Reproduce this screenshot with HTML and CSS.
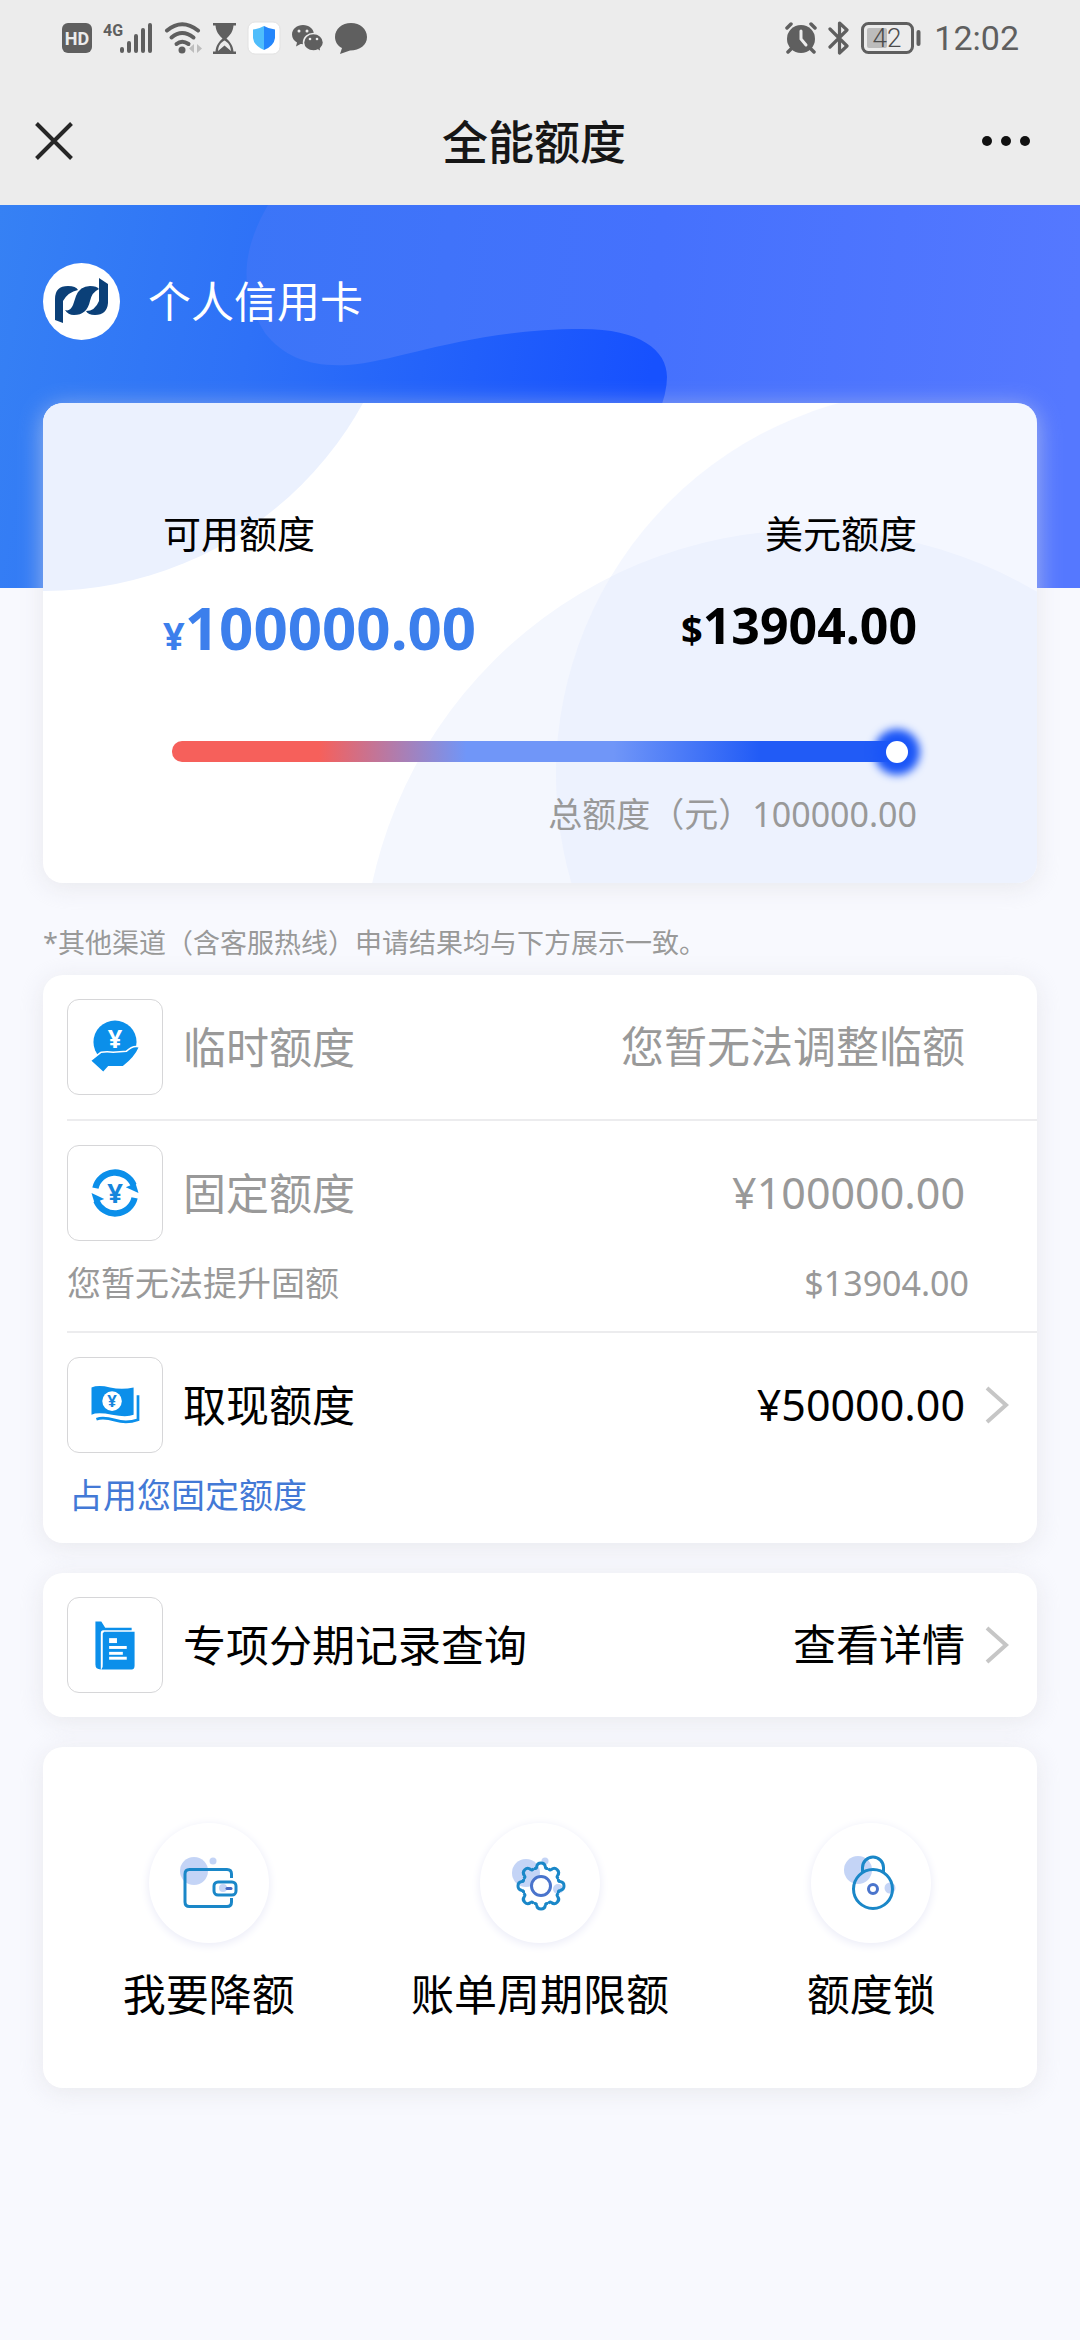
FILE: index.html
```html
<!DOCTYPE html>
<html lang="zh-CN">
<head>
<meta charset="utf-8">
<meta name="viewport" content="width=device-width, initial-scale=1">
<title>全能额度</title>
<link rel="stylesheet" href="styles.css">
</head>
<body>
<div class="statusbar">
  <div class="status-group">
    <svg width="30" height="30" viewBox="0 0 30 30"><rect width="30" height="30" rx="6" fill="#5f5f5f"/><text x="15" y="22" class="hd-text" text-anchor="middle">HD</text></svg>
    <svg class="signal" width="50" height="32" viewBox="0 0 50 32"><text x="0" y="14" class="net-text">4G</text><g stroke="#5f5f5f" stroke-width="4" stroke-linecap="round"><path d="M19 27v2M26 21v8M33 14v15M40 8v21M47 3v26"/></g></svg>
    <svg width="38" height="32" viewBox="0 0 38 32"><g fill="none" stroke="#5f5f5f" stroke-width="4" stroke-linecap="round"><path d="M3 8.500Q18 -4 34 8.500"/><path d="M7.500 15.500Q18 6.500 29.500 15.500"/><path d="M12.500 22Q18 17.500 24.500 22"/></g><circle cx="18" cy="28" r="3.500" fill="#5f5f5f"/><path d="M30 22v9l-5-4.500zM33 22v9l5-4.500z" fill="#bdbdbd"/></svg>
    <svg width="23" height="31" viewBox="0 0 23 31"><path d="M0 0h23v2.500h-2.500C20 9 17 12 13.500 15.500C17 19 20 22 20.500 28.500H23V31H0v-2.500h2.500C3 22 6 19 9.500 15.500C6 12 3 9 2.500 2.500H0z" fill="#5f5f5f"/><path d="M5 28C5.500 22 8 19.500 11.500 17.500C15 19.500 17.500 22 18 28L11.500 22.500z" fill="#ececec"/></svg>
    <svg width="34" height="34" viewBox="0 0 34 34"><rect x="1" y="1" width="32" height="32" rx="7" fill="#fff" stroke="#e2e2e2"/><path d="M17 5Q22 8 28 8.500V17Q27 25 17 29z" fill="#2486fb"/><path d="M17 5Q12 8 6 8.500V17Q7 25 17 29z" fill="#4fbdfb"/></svg>
    <svg width="32" height="29" viewBox="0 0 32 29"><path d="M11 1C5 1 0 5 0 10.500C0 14 2 17 5 18.500L4 22.500L8.500 20C18 21 22 16 22 10.500C22 5 17 1 11 1z" fill="#5f5f5f"/><path d="M21.500 9.500C16 9.500 11.500 13.500 11.500 18.500S16 27 21.500 27Q24 27 26 26L29 28L28.500 24.500Q31.500 22 31.500 18.500C31.500 13.500 27 9.500 21.500 9.500z" fill="#5f5f5f" stroke="#ececec" stroke-width="1.500"/><g fill="#ececec"><circle cx="7" cy="7" r="1.500"/><circle cx="15" cy="7" r="1.500"/><circle cx="18" cy="15" r="1.300"/><circle cx="25" cy="15" r="1.300"/></g></svg>
    <svg width="32" height="31" viewBox="0 0 32 31"><path d="M16 0C7 0 0 6 0 14C0 19 3 23 7 25L5 31L15 27.500C25 27.500 32 22 32 14C32 6 25 0 16 0z" fill="#5f5f5f"/></svg>
  </div>
  <div class="status-group">
    <svg width="32" height="32" viewBox="0 0 32 32"><circle cx="16" cy="17" r="14" fill="#5f5f5f"/><g fill="none" stroke="#5f5f5f" stroke-width="3.500" stroke-linecap="round"><path d="M2 6L6 2M30 6L26 2M6 27l-3 3M26 27l3 3"/></g><path d="M16 9v8l5 6" fill="none" stroke="#ececec" stroke-width="3" stroke-linecap="round"/></svg>
    <svg width="22" height="34" viewBox="0 0 22 34"><path d="M2 8L19 25L11.500 32V2L19 9L2 26" fill="none" stroke="#5f5f5f" stroke-width="3.200" stroke-linecap="round" stroke-linejoin="round"/></svg>
    <svg width="60" height="32" viewBox="0 0 60 32"><rect x="1.500" y="1.500" width="50" height="29" rx="6" fill="none" stroke="#5f5f5f" stroke-width="3"/><rect x="6" y="6" width="20" height="20" rx="2" fill="#bcbcbc"/><rect x="55.500" y="8" width="4" height="16" rx="2" fill="#5f5f5f"/><text x="26" y="25" class="battery-text" text-anchor="middle">42</text></svg>
    <time class="clock">12:02</time>
  </div>
</div>

<header class="navbar">
  <button class="nav-button" type="button" aria-label="关闭"><svg width="38" height="38" viewBox="0 0 38 38"><path d="M1.500 1.500L36.500 36.500M36.500 1.500L1.500 36.500" stroke="#262626" stroke-width="4"/></svg></button>
  <h1 class="nav-title">全能额度</h1>
  <button class="nav-button nav-more" type="button" aria-label="更多"><svg width="50" height="12" viewBox="0 0 50 12" fill="#111"><circle cx="6" cy="6" r="5"/><circle cx="25" cy="6" r="5"/><circle cx="44" cy="6" r="5"/></svg></button>
</header>

<main>
  <section class="hero">
    <svg class="hero-art" viewBox="0 0 1080 383" preserveAspectRatio="none" aria-hidden="true">
      <defs>
        <linearGradient id="sea" x1="0" y1="0" x2="660" y2="120" gradientUnits="userSpaceOnUse"><stop offset="0" stop-color="#3681f4"/><stop offset=".4" stop-color="#2e71f7"/><stop offset="1" stop-color="#1751fe"/></linearGradient>
        <linearGradient id="cloud" x1="240" y1="0" x2="1080" y2="80" gradientUnits="userSpaceOnUse"><stop offset="0" stop-color="#3b75f7"/><stop offset=".5" stop-color="#4571fd"/><stop offset="1" stop-color="#5578ff"/></linearGradient>
      </defs>
      <rect width="1080" height="383" fill="url(#sea)"/>
      <path d="M268 0C242 45 238 85 265 128C284 152 310 162 348 160C400 156 470 124 582 124C640 124 667 145 667 172Q667 188 658 210L620 383H1080V0z" fill="url(#cloud)"/>
    </svg>
    <div class="account">
      <svg width="77" height="77" viewBox="0 0 77 77" aria-hidden="true"><circle cx="38.500" cy="38.500" r="38.500" fill="#fff"/><g fill="#0b4078"><path d="M12 57V36Q12 23 25 23Q33 23 35 27Q25 29 20 38V60z"/><path d="M22 47Q27 49 30 42L33 33Q37 23 47 23Q54 23 56 26Q49 29 47 38Q44 52 31 52Q25 52 22 47z"/><path d="M56 15L65 21V40Q64 52 52 52Q45 52 43 48Q52 48 56 38z"/></g></svg>
      <span class="account-name">个人信用卡</span>
    </div>
  </section>

  <div class="content">
    <section class="card limit-card">
      <svg class="limit-art" viewBox="0 0 994 480" preserveAspectRatio="none" aria-hidden="true">
        <circle cx="2" cy="-175" r="363" fill="#ebf1fe"/>
        <circle cx="767" cy="575" r="448" fill="#f4f7fe"/>
        <circle cx="899" cy="372" r="386" fill="#e2ebff" fill-opacity=".38"/>
      </svg>
      <div class="limit-body">
        <dl class="limits">
          <div><dt>可用额度</dt><dd class="amount amount-main"><small>¥</small>100000.00</dd></div>
          <div class="limit-usd"><dt>美元额度</dt><dd class="amount"><small>$</small>13904.00</dd></div>
        </dl>
        <input class="usage" type="range" min="0" max="100000" value="100000" aria-label="可用额度">
        <p class="total">总额度（元）100000.00</p>
      </div>
    </section>

    <p class="notice">*其他渠道（含客服热线）申请结果均与下方展示一致。</p>

    <section class="card list">
      <div class="item muted">
        <div class="row">
          <svg class="tile" viewBox="0 0 96 96" aria-hidden="true"><circle cx="48" cy="43" r="22" fill="#0b8fea"/><text x="48" y="49" class="yen yen-light" text-anchor="middle">¥</text><path d="M24 62L34 54Q40 53 46 54L60 53Q66 47 72 48.500Q68 58 56 67.500H41L36 73z" fill="#0b8fea" stroke="#fff" stroke-width="3" stroke-linejoin="round" paint-order="stroke"/></svg>
          <span class="label">临时额度</span><span class="value">您暂无法调整临额</span>
        </div>
      </div>
      <div class="item muted">
        <div class="row">
          <svg class="tile" viewBox="0 0 96 96" aria-hidden="true"><g id="swing"><path d="M28 43A20.500 20.500 0 0 1 67 40" fill="none" stroke="#0b8fea" stroke-width="6.500"/><path d="M72 48L59 42L69 38z" fill="#0b8fea"/></g><use href="#swing" transform="rotate(180 48 48)"/><text x="48" y="58" class="yen yen-blue" text-anchor="middle">¥</text></svg>
          <span class="label">固定额度</span><span class="value">¥100000.00</span>
        </div>
        <div class="sub"><span>您暂无法提升固额</span><span class="sub-value">$13904.00</span></div>
      </div>
      <div class="item">
        <button class="row" type="button">
          <svg class="tile" viewBox="0 0 96 96" aria-hidden="true"><path d="M24 30Q31 27 43 30T67 30V58Q60 61 45 58T24 58z" fill="#0b8fea"/><path d="M71.500 38V63Q60 67 48 63.500T29 62.500" fill="none" stroke="#0b8fea" stroke-width="2.800"/><circle cx="45" cy="44" r="10" fill="#fff"/><text x="45" y="50" class="yen yen-small" text-anchor="middle">¥</text></svg>
          <span class="label">取现额度</span><span class="value">¥50000.00</span>
          <svg class="chevron" viewBox="0 0 24 40" aria-hidden="true"><path d="M2 3L21 20L2 37"/></svg>
        </button>
        <div class="sub"><a class="sub-link" href="#fixed">占用您固定额度</a></div>
      </div>
    </section>

    <section class="card list">
      <div class="item">
        <button class="row" type="button">
          <svg class="tile" viewBox="0 0 96 96" aria-hidden="true"><path d="M28 24H34L38 30.500H65V33H36Q33.500 33 33.500 36V73Q28 73 28 68z" fill="#0b8fea"/><path d="M37 34.500H68V69Q68 73 65 73H34Q36 71 35.500 67V36z" fill="#0b8fea"/><g fill="#fff"><rect x="42" y="41" width="8" height="5"/><rect x="42" y="49" width="18" height="3"/><rect x="42" y="55" width="14" height="3"/><rect x="42" y="60" width="18" height="3"/></g></svg>
          <span class="label">专项分期记录查询</span><span class="value">查看详情</span>
          <svg class="chevron" viewBox="0 0 24 40" aria-hidden="true"><path d="M2 3L21 20L2 37"/></svg>
        </button>
      </div>
    </section>

    <nav class="card actions">
      <button class="action" type="button">
        <svg class="action-icon" viewBox="0 0 120 120" aria-hidden="true"><circle cx="45" cy="48" r="14" class="tint"/><circle cx="64" cy="38" r="3.500" class="tint"/><g class="line"><path d="M82.500 55V51Q82.500 46.500 78 46.500H40.500Q36 46.500 36 51V79Q36 83.500 40.500 83.500H78Q82.500 83.500 82.500 79V75"/><rect x="65" y="59" width="22" height="13" rx="4"/></g><circle cx="74" cy="65" r="4" class="tint"/><path d="M78 65.500h4" stroke="#4568c4" stroke-width="3" stroke-linecap="round"/></svg>
        <span>我要降额</span>
      </button>
      <button class="action" type="button">
        <svg class="action-icon" viewBox="0 0 120 120" aria-hidden="true"><circle cx="46" cy="50" r="14" class="tint"/><circle cx="65" cy="38" r="3.500" class="tint"/><circle cx="78" cy="66" r="5" class="tint"/><g class="line" transform="translate(61 63)"><path id="tooth" d="M-7.300-17.600Q-4.600-16.800-4.400-19C-4-22-2.500-23 0-23S4-22 4.400-19Q4.600-16.800 7.300-17.600"/><use href="#tooth" transform="rotate(45)"/><use href="#tooth" transform="rotate(90)"/><use href="#tooth" transform="rotate(135)"/><use href="#tooth" transform="rotate(180)"/><use href="#tooth" transform="rotate(225)"/><use href="#tooth" transform="rotate(270)"/><use href="#tooth" transform="rotate(315)"/></g><circle cx="61" cy="63" r="9.500" class="core"/></svg>
        <span>账单周期限额</span>
      </button>
      <button class="action" type="button">
        <svg class="action-icon" viewBox="0 0 120 120" aria-hidden="true"><circle cx="47" cy="47" r="14" class="tint"/><circle cx="79" cy="65" r="5.500" class="tint"/><g class="line"><circle cx="62" cy="66" r="19.500"/><path d="M51.500 49V44.500A10.500 10.500 0 0 1 72.500 44.500V49"/></g><circle cx="62" cy="66" r="4.500" class="core"/></svg>
        <span>额度锁</span>
      </button>
    </nav>
  </div>
</main>
</body>
</html>
```
FILE: styles.css
```css
* {
  box-sizing: border-box;
}

body {
  margin: 0;
  min-height: 100vh;
  background: #f8f9fe;
  color: #000;
  font-family: "Noto Sans", "Noto Sans CJK SC", sans-serif;
  font-size: 43px;
  line-height: 60px;
}

h1, p, dl, dd {
  margin: 0;
}

svg {
  display: block;
  flex: none;
}

button {
  margin: 0;
  padding: 0;
  border: 0;
  background: none;
  color: inherit;
  font: inherit;
}

/* Status bar */
.statusbar {
  display: flex;
  justify-content: space-between;
  height: 76px;
  padding: 0 61px 0 62px;
  background: #ececec;
}

.status-group {
  display: flex;
  align-items: center;
  gap: 11px;
}

.clock {
  margin-left: 2px;
  color: #5f5f5f;
  font-family: Roboto, sans-serif;
  font-size: 34px;
}

.hd-text {
  fill: #ececec;
  font: 700 18px Roboto, sans-serif;
}

.net-text {
  fill: #5f5f5f;
  font: 700 16px Roboto, sans-serif;
}

.battery-text {
  fill: #4c4c4c;
  font: 300 26px Roboto, sans-serif;
}

/* Title bar */
.navbar {
  display: grid;
  grid-template-columns: 1fr auto 1fr;
  align-items: center;
  height: 129px;
  padding: 0 49px 0 35px;
  background: #ececec;
}

.nav-button {
  justify-self: start;
}

.nav-more {
  justify-self: end;
}

.nav-title {
  padding-left: 14px;
  margin-right: 12px;
  color: #161616;
  font-size: 46px;
  font-weight: 500;
}

/* Blue banner */
.hero {
  position: relative;
  height: 383px;
}

.hero-art, .limit-art {
  position: absolute;
  inset: 0;
  width: 100%;
  height: 100%;
}

.account {
  position: relative;
  display: flex;
  align-items: center;
  gap: 28px;
  padding: 58px 43px;
  color: #fff;
}

/* Cards */
.content {
  position: relative;
  margin-top: -185px;
  padding: 0 43px 43px;
}

.card {
  border-radius: 20px;
  background: #fff;
  box-shadow: 0 4px 24px rgba(222, 222, 226, .6);
}

.card + .card {
  margin-top: 30px;
}

.limit-card {
  position: relative;
  overflow: hidden;
}

.limit-body {
  position: relative;
  padding: 102px 120px 45px;
}

.limits {
  display: flex;
  justify-content: space-between;
}

.limits dt {
  font-size: 38px;
  line-height: 56px;
}

.limit-usd {
  text-align: right;
}

.amount {
  margin-top: 30px;
  font-size: 50px;
  font-weight: 700;
  line-height: 68px;
}

.amount-main {
  color: #3c7fec;
  font-size: 60px;
  line-height: 72px;
}

.amount small {
  font-size: 38px;
  line-height: 1;
}

.usage {
  display: block;
  width: calc(100% - 18px);
  height: 21px;
  margin: 78px 9px 28px;
  border-radius: 10px;
  background: linear-gradient(90deg, #f6605b 20%, #7096f8 40%, #7096f8 60%, #215bf6 80%);
  appearance: none;
}

.usage::-webkit-slider-thumb {
  width: 22px;
  height: 22px;
  border-radius: 50%;
  background: #fff;
  box-shadow: 0 0 9px 12px #1b56f7;
  appearance: none;
}

.total {
  color: #999;
  font-size: 34px;
  line-height: 48px;
  text-align: right;
}

.notice {
  padding: 40px 0 12px;
  color: #999;
  font-size: 27px;
  line-height: 40px;
}

/* Limit list */
.list {
  padding-left: 24px;
}

.item {
  padding: 24px 0;
}

.item + .item {
  border-top: 2px solid #ececee;
}

.muted {
  color: #999;
}

.row {
  display: flex;
  align-items: center;
  width: 100%;
  padding-right: 72px;
  text-align: left;
}

.tile {
  width: 96px;
  height: 96px;
  margin-right: 20px;
  border: 1px solid #d6d6d8;
  border-radius: 12px;
}

.label {
  padding-top: 2px;
}

.value {
  margin-left: auto;
}

.chevron {
  width: 24px;
  height: 40px;
  margin: 0 -44px 0 20px;
  fill: none;
  stroke: #c6c6c6;
  stroke-width: 4;
}

.sub {
  display: flex;
  justify-content: space-between;
  margin-top: 18px;
  padding-right: 68px;
  font-size: 34px;
  line-height: 48px;
}

.sub-link {
  padding-left: 2px;
  color: #4379d6;
  text-decoration: none;
}

.yen {
  font-family: "Noto Sans", sans-serif;
  font-weight: 700;
}

.yen-light {
  fill: #fff;
  font-size: 26px;
}

.yen-blue {
  fill: #1585dc;
  font-size: 28px;
}

.yen-small {
  fill: #1585dc;
  font-size: 17px;
}

/* Shortcuts */
.actions {
  display: grid;
  grid-template-columns: repeat(3, 1fr);
  padding: 76px 0 63px;
}

.action {
  display: flex;
  flex-direction: column;
  align-items: center;
  gap: 22px;
}

.action-icon {
  width: 120px;
  height: 120px;
  border-radius: 50%;
  box-shadow: 0 2px 8px 1px #ecedf8;
}

.tint {
  fill: #6c94e8;
  fill-opacity: .4;
}

.line {
  fill: none;
  stroke: #1a87c8;
  stroke-width: 3;
}

.core {
  fill: #fff;
  stroke: #4a74cc;
  stroke-width: 3;
}
```
